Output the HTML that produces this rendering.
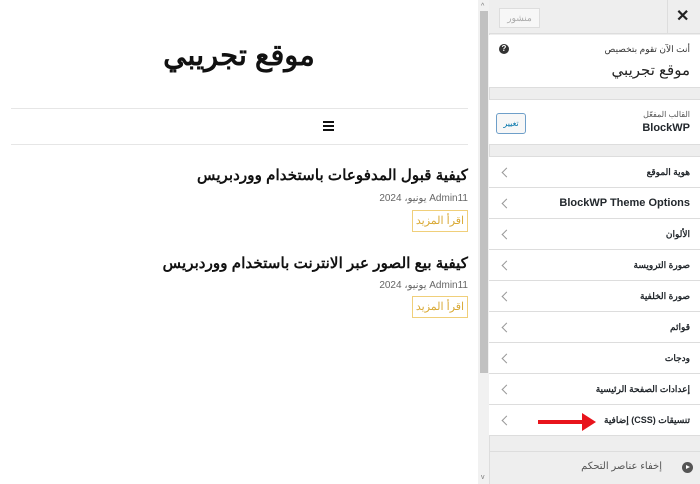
<!DOCTYPE html>
<html><head><meta charset="utf-8"><style>
*{margin:0;padding:0;box-sizing:border-box}
body{width:700px;height:484px;overflow:hidden;background:#fff;font-family:"Liberation Sans","Noto Sans CJK SC",sans-serif;position:relative}
.abs{position:absolute}
.left{left:0;top:0;width:478px;height:484px;background:#fff}
.ar{direction:rtl}
.title{position:absolute;left:0;width:478px;top:38px;text-align:center;font-size:29px;font-weight:bold;color:#111}
.hr{position:absolute;left:11px;width:457px;height:1px;background:#e6e6e6}
.ptitle{position:absolute;right:10px;font-size:15.2px;font-weight:bold;color:#111;direction:rtl;white-space:nowrap}
.meta{position:absolute;right:10px;font-size:10px;color:#666;direction:rtl}
.btn{position:absolute;left:412px;width:56px;height:22px;border:1px solid #f0cf7a;color:#d9a935;font-size:11px;text-align:center;line-height:20px}
.sb{left:478px;top:0;width:11px;height:484px;background:#f1f1f1}
.thumb{left:480px;top:11px;width:8px;height:362px;background:#c1c1c1}
.panel{left:489px;top:0;width:211px;height:484px;background:#eee;border-left:1px solid #ddd}
.item{position:absolute;left:489px;width:211px;height:31px;background:#fff;border-bottom:1px solid #ddd;font-size:9px;font-weight:bold;color:#23282d;direction:rtl;padding-right:10px;line-height:31px}
.item:after{content:"";position:absolute;left:14px;top:12px;width:6px;height:6px;border-left:1.3px solid #999;border-bottom:1.3px solid #999;transform:rotate(45deg)}
</style></head><body>
<div class="abs left">
<div class="title ar">موقع تجريبي</div>
<div class="hr" style="top:108px"></div>
<div class="abs" style="left:323px;top:121px;width:11px;height:2px;background:#111"></div>
<div class="abs" style="left:323px;top:125px;width:11px;height:2px;background:#111"></div>
<div class="abs" style="left:323px;top:129px;width:11px;height:2px;background:#111"></div>
<div class="hr" style="top:144px"></div>
<div class="ptitle" style="top:166px">كيفية قبول المدفوعات باستخدام ووردبريس</div>
<div class="meta" style="top:193px">Admin11 يونيو، 2024</div>
<div class="btn" style="top:210px">اقرأ المزيد</div>
<div class="ptitle" style="top:254px">كيفية بيع الصور عبر الانترنت باستخدام ووردبريس</div>
<div class="meta" style="top:280px">Admin11 يونيو، 2024</div>
<div class="btn" style="top:296px">اقرأ المزيد</div>
</div>
<div class="abs sb"></div><div class="abs thumb"></div>
<div class="abs" style="left:481px;top:3px;font-size:7px;color:#777">^</div>
<div class="abs" style="left:481px;top:474px;font-size:7px;color:#777">v</div>
<div class="abs panel"></div>
<div class="abs" style="left:489px;top:0;width:211px;height:34px;background:#eee;border-bottom:1px solid #ddd"></div>
<div class="abs" style="left:667px;top:0;width:1px;height:34px;background:#ddd"></div>
<div class="abs" style="left:676px;top:6px;font-size:16px;font-weight:bold;color:#222">✕</div>
<div class="abs" style="left:499px;top:8px;width:41px;height:20px;border:1px solid #ddd;background:#f7f7f7;color:#aaa;font-size:9px;text-align:center;line-height:18px">منشور</div>
<div class="abs" style="left:489px;top:35px;width:211px;height:53px;background:#fff;border-bottom:1px solid #ddd"></div>
<div class="abs ar" style="right:10px;top:44px;font-size:9px;color:#333">أنت الآن تقوم بتخصيص</div>
<div class="abs ar" style="right:10px;top:61px;font-size:15px;color:#222">موقع تجريبي</div>
<div class="abs" style="left:499px;top:44px;width:10px;height:10px;border-radius:50%;background:#333;color:#fff;font-size:8px;font-weight:bold;text-align:center;line-height:10px">?</div>
<div class="abs" style="left:489px;top:99px;width:211px;height:46px;background:#fff;border-top:1px solid #ddd;border-bottom:1px solid #ddd"></div>
<div class="abs ar" style="right:10px;top:110px;font-size:8px;color:#555">القالب المفعّل</div>
<div class="abs" style="right:10px;top:122px;font-size:11px;font-weight:bold;color:#23282d">BlockWP</div>
<div class="abs" style="left:496px;top:113px;width:30px;height:21px;border:1px solid #6e9fc9;border-radius:3px;background:#f7f7f7;color:#0073aa;font-size:8px;text-align:center;line-height:19px">تغيير</div>
<div class="abs" style="left:489px;top:156px;width:211px;height:1px;background:#ddd"></div>
<div class="item" style="top:157px">هوية الموقع</div>
<div class="item" style="top:188px;font-size:11px">BlockWP Theme Options</div>
<div class="item" style="top:219px">الألوان</div>
<div class="item" style="top:250px">صورة الترويسة</div>
<div class="item" style="top:281px">صورة الخلفية</div>
<div class="item" style="top:312px">قوائم</div>
<div class="item" style="top:343px">ودجات</div>
<div class="item" style="top:374px">إعدادات الصفحة الرئيسية</div>
<div class="item" style="top:405px">تنسيقات (CSS) إضافية</div>
<div class="abs" style="left:538px;top:420px;width:46px;height:4px;background:#e8141c"></div>
<div class="abs" style="left:582px;top:413px;width:0;height:0;border-top:9px solid transparent;border-bottom:9px solid transparent;border-left:14px solid #e8141c"></div>
<div class="abs" style="left:489px;top:451px;width:211px;height:1px;background:#ddd"></div>
<div class="abs ar" style="right:38px;top:461px;font-size:10px;color:#555">إخفاء عناصر التحكم</div>
<div class="abs" style="left:682px;top:462px;width:11px;height:11px;border-radius:50%;background:#555"></div>
<div class="abs" style="left:686px;top:465px;width:0;height:0;border-top:2.5px solid transparent;border-bottom:2.5px solid transparent;border-left:4px solid #fff"></div>
</body></html>
